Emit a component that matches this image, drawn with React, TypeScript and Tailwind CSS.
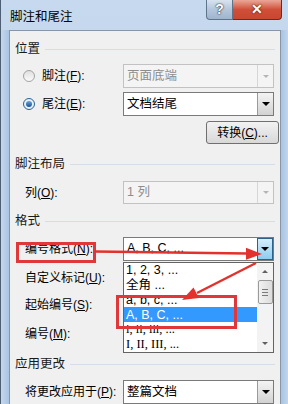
import type { ReactNode } from 'react';

type ComboProps = {
  text?: string;
  disabled?: boolean;
  pressed?: boolean;
};

function Combo({ text = '', disabled = false, pressed = false }: ComboProps) {
  return (
    <div
      className={
        disabled
          ? 'flex h-full w-[151px] items-stretch border border-[#c2c2c2] bg-[#f4f4f4]'
          : 'flex h-full w-[151px] items-stretch border border-[#7a7a7a] bg-white'
      }
    >
      <div
        className={
          disabled
            ? 'flex flex-1 items-center whitespace-nowrap pl-[3px] text-[12.5px] text-[#8d8d8d]'
            : 'flex flex-1 items-center whitespace-nowrap pl-[3px] text-[12.5px] text-black'
        }
      >
        {text}
      </div>
      {disabled ? (
        <div className="flex w-[16px] items-center justify-center border-l border-[#d6d6d6]">
          <span className="h-0 w-0 border-x-[3px] border-t-[3px] border-x-transparent border-t-[#b5b5b5]" />
        </div>
      ) : pressed ? (
        <div className="flex w-[16px] items-center justify-center border border-[#2c628b] bg-gradient-to-b from-[#d6eefb] to-[#8ecbef]">
          <span className="h-0 w-0 border-x-[4px] border-t-[4px] border-x-transparent border-t-black" />
        </div>
      ) : (
        <div className="flex w-[16px] items-center justify-center border-l border-[#9a9a9a] bg-gradient-to-b from-[#f4f4f4] to-[#d2d2d2]">
          <span className="h-0 w-0 border-x-[4px] border-t-[4px] border-x-transparent border-t-black" />
        </div>
      )}
    </div>
  );
}

function Header({ children, className = '' }: { children: ReactNode; className?: string }) {
  return (
    <div className={`mr-[5px] flex h-[16px] items-center gap-[5px] text-[12.5px] text-[#1a1a1a] ${className}`}>
      <span className="whitespace-nowrap">{children}</span>
      <div className="h-px flex-1 bg-[#d5dde6]" />
    </div>
  );
}

function Label({ children }: { children: ReactNode }) {
  return <div className="w-[108px] whitespace-nowrap pl-[10px] text-[12px] text-black">{children}</div>;
}

function Radio({ checked }: { checked?: boolean }) {
  return checked ? (
    <span className="flex h-[12px] w-[12px] items-center justify-center rounded-full border border-[#2c628b] bg-[#e6f2fb]">
      <span className="h-[6px] w-[6px] rounded-full bg-gradient-to-b from-[#6aa7de] to-[#1c4f8f]" />
    </span>
  ) : (
    <span className="h-[12px] w-[12px] rounded-full border border-[#a3a3a3] bg-gradient-to-b from-[#e0e0e0] to-[#fafafa]" />
  );
}

const listItems = [
  { t: '1, 2, 3, ...', serif: false },
  { t: '全角 ...', serif: false },
  { t: 'a, b, c, ...', serif: false },
  { t: 'A, B, C, ...', serif: false, selected: true },
  { t: 'i, ii, iii, ...', serif: true },
  { t: 'I, II, III, ...', serif: true },
];

export default function App() {
  return (
    <div className="relative h-[404px] w-[288px] overflow-hidden bg-gradient-to-b from-[#c6d9ee] to-[#b7cfe9] font-['Liberation_Sans','Noto_Sans_CJK_SC',sans-serif] text-[12px]">
      {/* title bar */}
      <div className="flex h-[30px] items-start border-l border-[#4d5f73]">
        <div className="pl-[9px] pt-[8px] text-[12.5px] text-black">脚注和尾注</div>
        <div className="ml-auto mr-[6px] flex h-[20px]">
          <div className="flex w-[27px] items-center justify-center rounded-bl-[4px] border border-t-0 border-[#5f7389] bg-gradient-to-b from-[#d8e3ef] via-[#b4c6db] to-[#9fb5ce] text-[14px] font-bold text-white [text-shadow:0_0_1px_#1f2c3b,0_0_2px_#1f2c3b]">
            ?
          </div>
          <div className="flex w-[49px] items-center justify-center rounded-br-[4px] border border-l-0 border-t-0 border-[#6b2a20] bg-gradient-to-b from-[#e9a797] via-[#cf4f38] to-[#c9462f] text-[14px] font-bold text-white [text-shadow:0_0_1px_#5a1a10,0_0_2px_#5a1a10]">
            ✕
          </div>
        </div>
      </div>

      {/* body */}
      <div className="flex h-[374px]">
        <div className="w-[9px] border-l border-[#4d5f73] bg-gradient-to-r from-[#c4d8ee] to-[#aac4e2]" />
        <div className="flex w-[272px] flex-col border-x border-t border-[#8796a8] bg-[#f0f0f0] pl-[5px] pt-[10px]">
          <Header>位置</Header>

          <div className="mt-[7px] flex h-[25px] items-center">
            <div className="flex w-[108px] items-center gap-[7px] pl-[8px] text-[12px] text-black">
              <Radio />
              <span>
                脚注(<span className="underline">F</span>):
              </span>
            </div>
            <Combo text="页面底端" disabled />
          </div>

          <div className="mt-[4px] flex h-[24px] items-center">
            <div className="flex w-[108px] items-center gap-[7px] pl-[8px] text-[12px] text-black">
              <Radio checked />
              <span>
                尾注(<span className="underline">E</span>):
              </span>
            </div>
            <Combo text="文档结尾" />
          </div>

          <div className="mt-[5px] flex h-[24px] justify-end pr-[1px]">
            <div className="flex w-[73px] items-center justify-center rounded-[3px] border border-[#707070] bg-gradient-to-b from-[#f2f2f2] to-[#d8d8d8] text-[12px] text-black">
              转换(<span className="underline">C</span>)...
            </div>
          </div>

          <Header className="mt-[12px]">脚注布局</Header>

          <div className="mt-[9px] flex h-[23px] items-center">
            <Label>
              列(<span className="underline">O</span>):
            </Label>
            <Combo text="1 列" disabled />
          </div>

          <Header className="mt-[9px]">格式</Header>

          <div className="mt-[8px] flex h-[24px] items-center">
            <Label>
              编号格式(<span className="underline">N</span>):
            </Label>
            <Combo text="A, B, C, ..." pressed />
          </div>

          <div className="mt-[6px] flex h-[24px] items-center">
            <Label>
              自定义标记(<span className="underline">U</span>):
            </Label>
          </div>
          <div className="mt-[3px] flex h-[24px] items-center">
            <Label>
              起始编号(<span className="underline">S</span>):
            </Label>
          </div>
          <div className="mt-[6px] flex h-[24px] items-center">
            <Label>
              编号(<span className="underline">M</span>):
            </Label>
          </div>

          <Header className="mt-[10px]">应用更改</Header>

          <div className="mt-[8px] flex h-[24px] shrink-0 items-center">
            <Label>
              将更改应用于(<span className="underline">P</span>):
            </Label>
            <Combo text="整篇文档" />
          </div>
        </div>
        <div className="w-[7px] bg-gradient-to-r from-[#a9c3e1] to-[#c2d6ec]" />
      </div>

      {/* dropped-down list */}
      <div className="absolute left-[123px] top-[262px] flex h-[91px] w-[151px] border border-[#646464] bg-white">
        <div className="flex flex-1 flex-col">
          {listItems.map((it) => (
            <div
              key={it.t}
              className={[
                'flex h-[15px] items-center whitespace-nowrap pl-[2px] text-[12.5px] leading-none',
                it.selected ? 'bg-[#3399ff] text-white' : 'text-black',
                it.serif ? "font-['Liberation_Serif',serif]" : '',
              ].join(' ')}
            >
              {it.t}
            </div>
          ))}
        </div>
        <div className="flex w-[16px] flex-col items-center bg-[#f3f3f3]">
          <div className="flex h-[17px] items-center justify-center">
            <span className="h-0 w-0 border-x-[3px] border-b-[3px] border-x-transparent border-b-[#606060]" />
          </div>
          <div className="flex h-[24px] w-[15px] flex-col items-center justify-center gap-[2px] rounded-[2px] border border-[#9a9a9a] bg-gradient-to-r from-[#f2f2f2] to-[#dcdcdc]">
            <span className="h-px w-[6px] bg-[#7a7a7a]" />
            <span className="h-px w-[6px] bg-[#7a7a7a]" />
            <span className="h-px w-[6px] bg-[#7a7a7a]" />
          </div>
          <div className="mt-auto flex h-[17px] items-center justify-center">
            <span className="h-0 w-0 border-x-[3px] border-t-[3px] border-x-transparent border-t-[#606060]" />
          </div>
        </div>
      </div>

      {/* red annotations */}
      <div className="absolute left-[16px] top-[242px] h-[21px] w-[80px] border-[3px] border-[#e0383a]" />
      <div className="absolute left-[116px] top-[295px] h-[34px] w-[121px] border-[3px] border-[#e0383a]" />
      <svg className="pointer-events-none absolute left-0 top-0" width="288" height="404" viewBox="0 0 288 404">
        <line x1="95" y1="251.5" x2="247" y2="253.5" stroke="#e3312d" strokeWidth="2.5" />
        <polygon points="262,254 246,247.8 246,259.8" fill="#e3312d" />
        <line x1="256" y1="263" x2="197" y2="293" stroke="#e3312d" strokeWidth="2.5" />
        <polygon points="182,300 198.9,298 193.5,287.4" fill="#e3312d" />
      </svg>
    </div>
  );
}
